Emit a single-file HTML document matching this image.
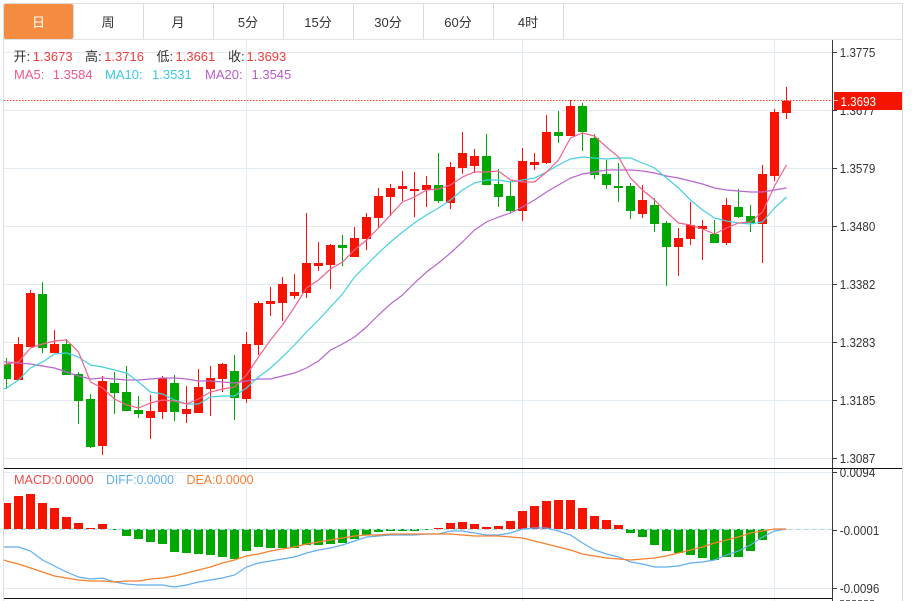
<!DOCTYPE html>
<html><head><meta charset="utf-8"><style>
html,body{margin:0;padding:0;background:#fff;width:912px;height:601px;overflow:hidden}
svg{display:block;position:absolute;left:0;top:0;overflow:hidden}
text{font-family:"Liberation Sans","Noto Sans CJK SC",sans-serif}
</style></head><body>
<svg width="912" height="601" viewBox="0 0 912 601" xmlns="http://www.w3.org/2000/svg">
<defs><clipPath id="c"><rect x="4" y="40" width="828" height="561"/></clipPath>
<clipPath id="m"><rect x="4" y="469" width="828" height="129"/></clipPath>
<clipPath id="ax"><rect x="833" y="469" width="69" height="132"/></clipPath></defs>
<!-- frame -->
<path d="M3.5 601V3.5H902.500V601" fill="none" stroke="#dedede"/>
<path d="M4 39.5H902" stroke="#e0e3e6"/>
<rect x="4" y="4" width="69" height="35" rx="2" fill="#f58c40"/>
<path d="M73.5 4V39M143.5 4V39M213.5 4V39M283.5 4V39M353.5 4V39M423.5 4V39M493.5 4V39M563.5 4V39" stroke="#dcdcdc"/>
<g font-size="13" fill="#333" text-anchor="middle">
<text x="38.5" y="27" fill="#fff">日</text>
<text x="108" y="27">周</text>
<text x="178" y="27">月</text>
<text x="248" y="27">5分</text>
<text x="318" y="27">15分</text>
<text x="388" y="27">30分</text>
<text x="458" y="27">60分</text>
<text x="528" y="27">4时</text>
</g>
<!-- grid -->
<path d="M4 52.5H832M4 110.500H832M4 168.500H832M4 226.500H832M4 284.500H832M4 342.500H832M4 400.500H832M4 458.500H832M4 472.500H832M4 588.500H832M246.500 40V601M522.500 40V601M774.500 40V601" stroke="#e3ecf2" fill="none"/>
<!-- candles -->
<g clip-path="url(#c)">
<path stroke="#f51400" fill="none" d="M18.5 337V380M30.500 290V347M54.500 330V353M102.500 376V455M150.500 395V439M162.500 376V419M186.500 386V423M198.500 369V413M210.500 366V416M222.500 363V392M246.500 332V403M258.500 301V355M270.500 287V316M282.500 277V321M294.500 274V299M306.500 213V298M318.500 242V271M330.500 244V289M354.500 227V257M366.500 213V250M378.500 188V228M390.500 184V216M402.500 171V201M414.500 172V217M426.500 176V207M450.500 162V209M462.500 132V174M474.500 149V173M522.500 148V221M534.500 153V170M546.500 115V164M570.500 100V136M642.500 185V218M678.500 228V276M690.500 202V245M702.500 220V260M726.500 198V245M762.500 165V263M774.500 109V181M786.500 87V119"/>
<path stroke="#00a800" fill="none" d="M6.500 358V389M42.500 282V353M66.500 339V375M78.500 372V424M90.500 394V448M114.500 372V414M126.500 366V411M138.500 396V418M174.500 375V421M234.500 355V420M342.500 235V266M438.500 153V203M486.500 134V185M498.500 169V207M510.500 181V213M558.500 111V143M582.500 103V151M594.500 134V179M606.500 160V189M618.500 163V202M630.500 183V219M654.500 198V232M666.500 221V286M714.500 220V243M738.500 189V218M750.500 205V232"/>
<path fill="#f51400" d="M14 344h9v36h-9zM26 293h9v54h-9zM50 344h9v9h-9zM98 381h9v65h-9zM146 411h9v7h-9zM158 378h9v34h-9zM182 409h9v5h-9zM194 387h9v26h-9zM206 378h9v11h-9zM218 364h9v15h-9zM242 344h9v55h-9zM254 303h9v42h-9zM266 301h9v3h-9zM278 284h9v19h-9zM290 292h9v4h-9zM302 263h9v30h-9zM314 263h9v3h-9zM326 245h9v20h-9zM350 238h9v19h-9zM362 217h9v22h-9zM374 196h9v22h-9zM386 188h9v9h-9zM398 186h9v3h-9zM410 189h9v2h-9zM422 185h9v5h-9zM446 167h9v36h-9zM458 153h9v15h-9zM470 156h9v10h-9zM518 161h9v50h-9zM530 162h9v3h-9zM542 132h9v31h-9zM566 106h9v30h-9zM638 200h9v14h-9zM674 238h9v9h-9zM686 225h9v14h-9zM698 226h9v3h-9zM722 205h9v38h-9zM758 174h9v50h-9zM770 112h9v64h-9zM782 101h9v12h-9z"/>
<path fill="#00a800" d="M2 364h9v15h-9zM38 294h9v54h-9zM62 344h9v31h-9zM74 374h9v27h-9zM86 399h9v48h-9zM110 383h9v10h-9zM122 392h9v19h-9zM134 410h9v4h-9zM170 383h9v29h-9zM230 371h9v27h-9zM338 245h9v3h-9zM434 185h9v16h-9zM482 156h9v29h-9zM494 184h9v13h-9zM506 196h9v15h-9zM554 132h9v4h-9zM578 106h9v26h-9zM590 138h9v37h-9zM602 174h9v11h-9zM614 186h9v2h-9zM626 186h9v25h-9zM650 205h9v19h-9zM662 223h9v24h-9zM710 234h9v9h-9zM734 207h9v10h-9zM746 216h9v7h-9z"/>
<path fill="none" stroke="#b866cf" stroke-width="1.200" d="M4 362L6.500 362L18.500 363L30.500 364L42.500 366L54.500 368L66.500 372L78.500 376L90.500 379L102.500 378L114.500 379L126.500 380L138.500 380L150.500 379L162.500 378L174.500 378L186.500 379L198.500 381L210.500 381L222.500 382L234.500 383L246.500 381L258.500 379L270.500 379L282.500 376L294.500 373L306.500 368L318.500 361L330.500 350L342.500 344L354.500 337L366.500 327L378.500 315L390.500 304L402.500 295L414.500 283L426.500 272L438.500 263L450.500 253L462.500 242L474.500 230L486.500 222L498.500 217L510.500 213L522.500 207L534.500 200L546.500 192L558.500 185L570.500 178L582.500 174L594.500 172L606.500 170L618.500 170L630.500 170L642.500 171L654.500 173L666.500 176L678.500 178L690.500 181L702.500 184L714.500 188L726.500 190L738.500 191L750.500 192L762.500 192L774.500 190L786.500 188"/>
<path fill="none" stroke="#45cfe0" stroke-width="1.200" d="M4 389L6.500 388L18.500 380L30.500 368L42.500 362L54.500 354L66.500 353L78.500 357L90.500 365L102.500 367L114.500 370L126.500 373L138.500 382L150.500 392L162.500 394L174.500 400L186.500 404L198.500 404L210.500 397L222.500 396L234.500 396L246.500 388L258.500 377L270.500 368L282.500 357L294.500 345L306.500 332L318.500 320L330.500 307L342.500 294L354.500 277L366.500 265L378.500 253L390.500 242L402.500 232L414.500 223L426.500 215L438.500 208L450.500 200L462.500 190L474.500 183L486.500 180L498.500 180L510.500 182L522.500 180L534.500 178L546.500 172L558.500 165L570.500 159L582.500 157L594.500 158L606.500 159L618.500 158L630.500 158L642.500 163L654.500 168L666.500 178L678.500 188L690.500 200L702.500 210L714.500 218L726.500 221L738.500 223L750.500 224L762.500 222L774.500 208L786.500 197"/>
<path fill="none" stroke="#f2628f" stroke-width="1.200" d="M4 365L6.500 364L18.500 362L30.500 348L42.500 344L54.500 341L66.500 340L78.500 352L90.500 382L102.500 388L114.500 399L126.500 405L138.500 408L150.500 403L162.500 400L174.500 401L186.500 404L198.500 399L210.500 392L222.500 389L234.500 387L246.500 375L258.500 357L270.500 340L282.500 325L294.500 307L306.500 288L318.500 280L330.500 269L342.500 262L354.500 250L366.500 240L378.500 228L390.500 215L402.500 202L414.500 197L426.500 190L438.500 189L450.500 185L462.500 177L474.500 172L486.500 172L498.500 171L510.500 180L522.500 182L534.500 182L546.500 172L558.500 160L570.500 138L582.500 133L594.500 136L606.500 147L618.500 157L630.500 178L642.500 190L654.500 200L666.500 212L678.500 223L690.500 225L702.500 229L714.500 234L726.500 228L738.500 223L750.500 222L762.500 212L774.500 186L786.500 165"/>
</g>
<!-- last price line -->
<path d="M4 100.500H832" stroke="#f5402a" stroke-dasharray="1.500 1.500"/>
<!-- MACD -->
<g clip-path="url(#m)">
<path fill="#f51400" d="M2 503h9v26h-9zM14 496h9v33h-9zM26 494h9v35h-9zM38 503h9v26h-9zM50 508h9v21h-9zM62 517h9v12h-9zM74 523h9v6h-9zM86 528h9v1h-9zM98 524h9v5h-9zM434 528h9v1h-9zM446 523h9v6h-9zM458 522h9v7h-9zM470 524h9v5h-9zM482 527h9v2h-9zM494 526h9v3h-9zM506 521h9v8h-9zM518 511h9v18h-9zM530 506h9v23h-9zM542 501h9v28h-9zM554 500h9v29h-9zM566 500h9v29h-9zM578 508h9v21h-9zM590 516h9v13h-9zM602 520h9v9h-9zM614 525h9v4h-9z"/>
<path fill="#00a800" d="M110 529h9v1h-9zM122 529h9v7h-9zM134 529h9v10h-9zM146 529h9v13h-9zM158 529h9v15h-9zM170 529h9v23h-9zM182 529h9v24h-9zM194 529h9v25h-9zM206 529h9v26h-9zM218 529h9v28h-9zM230 529h9v30h-9zM242 529h9v22h-9zM254 529h9v18h-9zM266 529h9v19h-9zM278 529h9v19h-9zM290 529h9v19h-9zM302 529h9v16h-9zM314 529h9v16h-9zM326 529h9v15h-9zM338 529h9v14h-9zM350 529h9v10h-9zM362 529h9v6h-9zM374 529h9v3h-9zM386 529h9v2h-9zM398 529h9v2h-9zM410 529h9v2h-9zM422 529h9v1h-9zM626 529h9v4h-9zM638 529h9v8h-9zM650 529h9v16h-9zM662 529h9v22h-9zM674 529h9v24h-9zM686 529h9v26h-9zM698 529h9v29h-9zM710 529h9v31h-9zM722 529h9v28h-9zM734 529h9v28h-9zM746 529h9v22h-9zM758 529h9v11h-9z"/>
<path d="M4 529.500H832" stroke="#a9d9f2" stroke-dasharray="5 3"/>
<path fill="none" stroke="#62aef0" stroke-width="1.200" d="M4 547L6.500 547L18.500 547L30.500 551L42.500 560L54.500 566L66.500 572L78.500 577L90.500 579L102.500 578L114.500 582L126.500 584L138.500 585L150.500 585L162.500 585L174.500 587L186.500 585L198.500 582L210.500 580L222.500 578L234.500 575L246.500 567L258.500 563L270.500 561L282.500 559L294.500 557L306.500 553L318.500 550L330.500 548L342.500 545L354.500 541L366.500 537L378.500 536L390.500 535L402.500 535L414.500 535L426.500 534L438.500 534L450.500 531L462.500 531L474.500 533L486.500 535L498.500 535L510.500 533L522.500 529L534.500 528L546.500 528L558.500 531L570.500 535L582.500 543L594.500 550L606.500 554L618.500 557L630.500 562L642.500 564L654.500 567L666.500 567L678.500 566L690.500 563L702.500 562L714.500 560L726.500 555L738.500 551L750.500 545L762.500 537L774.500 531L786.500 529"/>
<path fill="none" stroke="#f7802f" stroke-width="1.300" d="M4 560L6.500 561L18.500 564L30.500 568L42.500 572L54.500 576L66.500 578L78.500 580L90.500 581L102.500 581L114.500 582L126.500 581L138.500 581L150.500 579L162.500 578L174.500 576L186.500 573L198.500 570L210.500 567L222.500 563L234.500 560L246.500 556L258.500 554L270.500 551L282.500 549L294.500 547L306.500 544L318.500 542L330.500 540L342.500 538L354.500 536L366.500 535L378.500 535L390.500 534L402.500 534L414.500 534L426.500 534L438.500 534L450.500 534L462.500 535L474.500 536L486.500 536L498.500 536L510.500 537L522.500 538L534.500 541L546.500 544L558.500 547L570.500 550L582.500 554L594.500 556L606.500 558L618.500 559L630.500 560L642.500 559L654.500 558L666.500 556L678.500 553L690.500 550L702.500 547L714.500 543L726.500 540L738.500 537L750.500 533L762.500 531L774.500 529L786.500 529"/>
</g>
<!-- axis -->
<path d="M832.500 40V601M832 52.500H837M832 110.500H837M832 168.500H837M832 226.500H837M832 284.500H837M832 342.500H837M832 400.500H837M832 458.500H837M832 472.500H837M832 530.500H837M832 588.500H837" stroke="#3a3a3a" fill="none"/>
<g font-size="13" fill="#333">
<text x="839.800" y="57" textLength="35.500" lengthAdjust="spacingAndGlyphs">1.3775</text>
<text x="839.800" y="115" textLength="35.500" lengthAdjust="spacingAndGlyphs">1.3677</text>
<text x="839.800" y="173" textLength="35.500" lengthAdjust="spacingAndGlyphs">1.3579</text>
<text x="839.800" y="231" textLength="35.500" lengthAdjust="spacingAndGlyphs">1.3480</text>
<text x="839.800" y="289" textLength="35.500" lengthAdjust="spacingAndGlyphs">1.3382</text>
<text x="839.800" y="347" textLength="35.500" lengthAdjust="spacingAndGlyphs">1.3283</text>
<text x="839.800" y="405" textLength="35.500" lengthAdjust="spacingAndGlyphs">1.3185</text>
<text x="839.800" y="463" textLength="35.500" lengthAdjust="spacingAndGlyphs">1.3087</text>
<text x="839.800" y="477" textLength="35.500" lengthAdjust="spacingAndGlyphs" clip-path="url(#ax)">0.0094</text>
<text x="839.800" y="535" textLength="39.500" lengthAdjust="spacingAndGlyphs">-0.0001</text>
<text x="839.800" y="593" textLength="39.500" lengthAdjust="spacingAndGlyphs">-0.0096</text>
</g>
<path d="M840 600.500H875" stroke="#666" stroke-dasharray="4 2"/>
<path d="M4 468.500H902M4 598.500H832" stroke="#111" fill="none"/>
<rect x="834" y="92" width="68" height="18" fill="#f51400"/>
<path d="M834 100.500H838" stroke="#ffb3a8"/>
<text x="840.500" y="106" font-size="13" fill="#fff" textLength="35.500" lengthAdjust="spacingAndGlyphs">1.3693</text>
<!-- legends -->
<g font-size="13">
<text x="13.500" y="61" fill="#333">开:</text><text x="32.800" y="61" fill="#f23c3c">1.3673</text>
<text x="85" y="61" fill="#333">高:</text><text x="104.200" y="61" fill="#f23c3c">1.3716</text>
<text x="156.500" y="61" fill="#333">低:</text><text x="175.500" y="61" fill="#f23c3c">1.3661</text>
<text x="228" y="61" fill="#333">收:</text><text x="246.500" y="61" fill="#f23c3c">1.3693</text>
<text x="14" y="79" fill="#f0588c">MA5:</text><text x="52.800" y="79" fill="#f0588c">1.3584</text>
<text x="105" y="79" fill="#3ccbe0">MA10:</text><text x="152" y="79" fill="#3ccbe0">1.3531</text>
<text x="205" y="79" fill="#b85ccb">MA20:</text><text x="251.500" y="79" fill="#b85ccb">1.3545</text>
<text x="14" y="484" fill="#f04a4a" textLength="79.500" lengthAdjust="spacingAndGlyphs">MACD:0.0000</text>
<text x="106" y="484" fill="#5cb0f2" textLength="68" lengthAdjust="spacingAndGlyphs">DIFF:0.0000</text>
<text x="186.500" y="484" fill="#f77d30" textLength="67" lengthAdjust="spacingAndGlyphs">DEA:0.0000</text>
</g>
</svg>
</body></html>
